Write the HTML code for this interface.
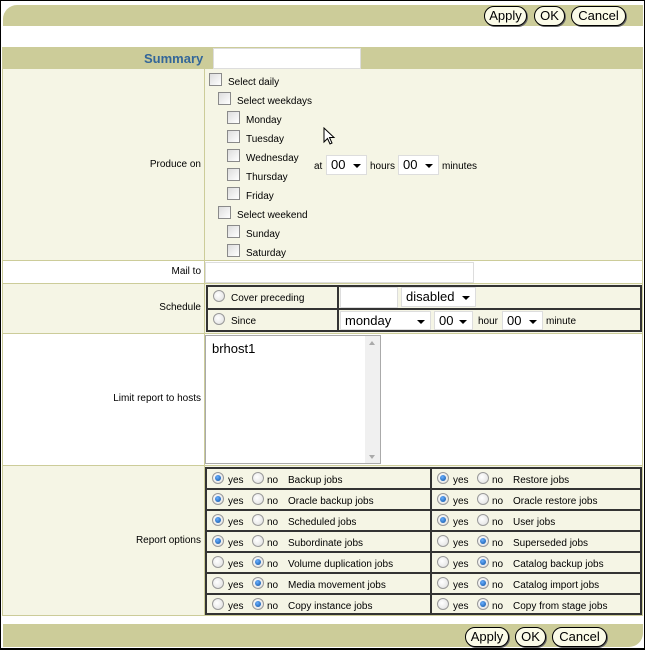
<!DOCTYPE html>
<html><head><meta charset="utf-8"><style>
*{margin:0;padding:0;box-sizing:border-box}
body{width:645px;height:650px;position:relative;background:#fff;font-family:"Liberation Sans",Arial,sans-serif;font-size:10px;color:#000;overflow:hidden}
.a{position:absolute}
.t{position:absolute;font-size:10px;line-height:12px;white-space:nowrap}
.cb{position:absolute;width:13px;height:13px;border:1px solid #8a8a8a;background:linear-gradient(135deg,#ddd,#fff)}
.rd{position:absolute;width:12px;height:12px;border-radius:50%;border:1px solid #999;background:radial-gradient(circle at 40% 40%,#fff,#ddd)}
.rd.on::after{content:"";position:absolute;left:2px;top:2px;width:6px;height:6px;border-radius:50%;background:radial-gradient(circle at 40% 35%,#6ab0ff,#0a4fa0)}
.sel{position:absolute;background:#fff;border:1px solid #ddd;font-size:13px;line-height:18px;padding-left:4px;color:#000}
.sel::after{content:"";position:absolute;right:5px;top:8px;border-left:4px solid transparent;border-right:4px solid transparent;border-top:4px solid #000}
.btn{position:absolute;height:20px;border:1px solid #000;border-radius:10px;background:#fbfbe8;font-size:13px;line-height:18px;text-align:center;box-shadow:1px 1px 0 #666}
.row{position:absolute;left:2px;width:641px;border-bottom:1px solid #cccc99}
.lbl{position:absolute;right:444px;font-size:10px;white-space:nowrap}
</style></head><body>
<div class="a" style="left:0;top:0;width:645px;height:650px;border:1px solid #000;border-bottom:2px solid #000"></div>
<div class="a" style="left:3px;top:5px;width:640px;height:21px;background:#cccc99;border-top-left-radius:14px"></div>
<div class="btn" style="left:484px;top:6px;width:43px">Apply</div>
<div class="btn" style="left:534px;top:6px;width:31px">OK</div>
<div class="btn" style="left:571px;top:6px;width:55px">Cancel</div>
<div class="row" style="top:47px;height:22px;background:#cccc99"></div>
<div class="row" style="top:69px;height:192px;background:#f5f5e5"></div>
<div class="row" style="top:261px;height:23px;background:#fff"></div>
<div class="row" style="top:284px;height:50px;background:#f5f5e5"></div>
<div class="row" style="top:334px;height:132px;background:#fff"></div>
<div class="row" style="top:466px;height:150px;background:#f5f5e5"></div>
<div class="a" style="left:2px;top:47px;width:1px;height:569px;background:#cccc99"></div>
<div class="a" style="left:642px;top:47px;width:1px;height:569px;background:#cccc99"></div>
<div class="a" style="left:204px;top:69px;width:1px;height:547px;background:#cccc99"></div>
<div class="a" style="left:144px;top:51px;font-size:13px;font-weight:bold;color:#336699">Summary</div>
<div class="a" style="left:213px;top:48px;width:148px;height:21px;background:#fff;border:1px solid #ddd"></div>
<div class="lbl" style="top:159px">Produce on</div>
<div class="cb" style="left:209px;top:73px"></div><div class="t" style="left:228px;top:77px">Select daily</div>
<div class="cb" style="left:218px;top:92px"></div><div class="t" style="left:237px;top:96px">Select weekdays</div>
<div class="cb" style="left:227px;top:111px"></div><div class="t" style="left:246px;top:115px">Monday</div>
<div class="cb" style="left:227px;top:130px"></div><div class="t" style="left:246px;top:134px">Tuesday</div>
<div class="cb" style="left:227px;top:149px"></div><div class="t" style="left:246px;top:153px">Wednesday</div>
<div class="cb" style="left:227px;top:168px"></div><div class="t" style="left:246px;top:172px">Thursday</div>
<div class="cb" style="left:227px;top:187px"></div><div class="t" style="left:246px;top:191px">Friday</div>
<div class="cb" style="left:218px;top:206px"></div><div class="t" style="left:237px;top:210px">Select weekend</div>
<div class="cb" style="left:227px;top:225px"></div><div class="t" style="left:246px;top:229px">Sunday</div>
<div class="cb" style="left:227px;top:244px"></div><div class="t" style="left:246px;top:248px">Saturday</div>
<div class="t" style="left:314px;top:161px">at</div>
<div class="sel" style="left:326px;top:155px;width:41px;height:20px">00</div>
<div class="t" style="left:370px;top:161px">hours</div>
<div class="sel" style="left:398px;top:155px;width:41px;height:20px">00</div>
<div class="t" style="left:442px;top:161px">minutes</div>
<svg class="a" style="left:323px;top:127px" width="14" height="20" viewBox="0 0 14 20"><path d="M1 1 L1 15 L4.5 11.5 L7 17 L9 16 L6.5 10.5 L11 10.5 Z" fill="#fff" stroke="#000" stroke-width="1"/></svg>
<div class="lbl" style="top:266px">Mail to</div>
<div class="a" style="left:205px;top:262px;width:269px;height:21px;background:#fff;border:1px solid #ddd"></div>
<div class="lbl" style="top:302px">Schedule</div>
<div class="a" style="left:206px;top:285px;width:436px;height:47px;border:2px solid #333"></div>
<div class="a" style="left:207px;top:308px;width:434px;height:2px;background:#333"></div>
<div class="a" style="left:337px;top:286px;width:2px;height:45px;background:#333"></div>
<div class="rd" style="left:213px;top:290px"></div><div class="t" style="left:231px;top:293px">Cover preceding</div>
<div class="rd" style="left:213px;top:313px"></div><div class="t" style="left:231px;top:316px">Since</div>
<div class="a" style="left:340px;top:287px;width:58px;height:21px;background:#fff;border:1px solid #ddd"></div>
<div class="sel" style="left:401px;top:287px;width:75px;height:20px">disabled</div>
<div class="sel" style="left:340px;top:311px;width:91px;height:19px">monday</div>
<div class="sel" style="left:434px;top:311px;width:39px;height:19px">00</div>
<div class="t" style="left:478px;top:316px">hour</div>
<div class="sel" style="left:502px;top:311px;width:41px;height:19px">00</div>
<div class="t" style="left:546px;top:316px">minute</div>
<div class="lbl" style="top:393px">Limit report to hosts</div>
<div class="a" style="left:205px;top:335px;width:176px;height:129px;background:#fff;border:1px solid #aaa"></div>
<div class="a" style="left:365px;top:336px;width:15px;height:127px;background:#f0f0f0"></div>
<div class="a" style="left:369px;top:341px;border-left:3px solid transparent;border-right:3px solid transparent;border-bottom:4px solid #aaa"></div>
<div class="a" style="left:369px;top:455px;border-left:3px solid transparent;border-right:3px solid transparent;border-top:4px solid #aaa"></div>
<div class="a" style="left:212px;top:341px;font-size:13px">brhost1</div>
<div class="lbl" style="top:535px">Report options</div>
<div class="a" style="left:205px;top:467px;width:437px;height:148px;border:2px solid #333"></div>
<div class="a" style="left:430px;top:468px;width:2px;height:146px;background:#333"></div>
<div id="ro"></div>
<script>
var L=[["Backup jobs",1],["Oracle backup jobs",1],["Scheduled jobs",1],["Subordinate jobs",1],["Volume duplication jobs",0],["Media movement jobs",0],["Copy instance jobs",0]];
var R=[["Restore jobs",1],["Oracle restore jobs",1],["User jobs",1],["Superseded jobs",0],["Catalog backup jobs",0],["Catalog import jobs",0],["Copy from stage jobs",0]];
var h="";
for(var i=0;i<7;i++){var y=467+i*21;
if(i>0)h+='<div class="a" style="left:206px;top:'+y+'px;width:435px;height:2px;background:#333"></div>';
[[L[i],206],[R[i],431]].forEach(function(p){var x=p[1],d=p[0];
h+='<div class="rd'+(d[1]?' on':'')+'" style="left:'+(x+6)+'px;top:'+(y+5)+'px"></div><div class="t" style="left:'+(x+22)+'px;top:'+(y+8)+'px">yes</div>';
h+='<div class="rd'+(d[1]?'':' on')+'" style="left:'+(x+46)+'px;top:'+(y+5)+'px"></div><div class="t" style="left:'+(x+61)+'px;top:'+(y+8)+'px">no</div>';
h+='<div class="t" style="left:'+(x+82)+'px;top:'+(y+8)+'px">'+d[0]+'</div>';});}
document.getElementById("ro").innerHTML=h;
</script>
<div class="a" style="left:3px;top:624px;width:640px;height:23px;background:#cccc99;border-bottom-right-radius:14px"></div>
<div class="btn" style="left:465px;top:627px;width:44px">Apply</div>
<div class="btn" style="left:515px;top:627px;width:31px">OK</div>
<div class="btn" style="left:552px;top:627px;width:55px">Cancel</div>
</body></html>
